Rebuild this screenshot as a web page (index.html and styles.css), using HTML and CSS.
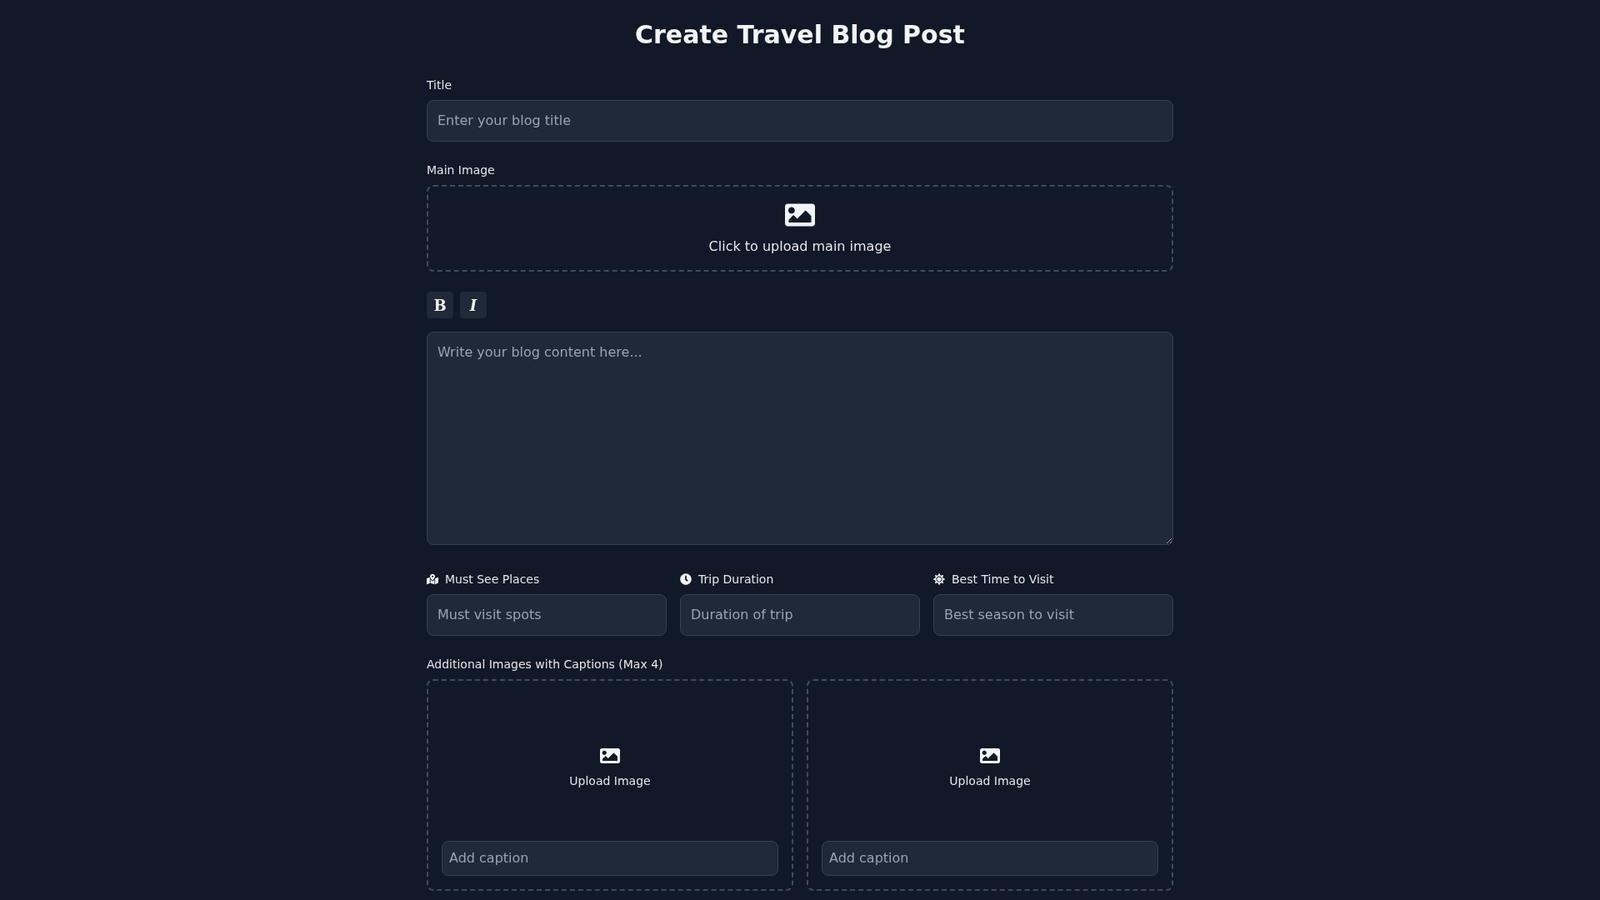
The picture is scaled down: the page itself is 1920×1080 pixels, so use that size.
FILE: index.html
```html
<!DOCTYPE html>
<html lang="en">
<head>
  <meta charset="UTF-8" />
  <title>Create Travel Blog Post</title>
  <link rel="stylesheet" href="styles.css">
</head>
<body>
  <div class="container">
    <h1>Create Travel Blog Post</h1>
    <div class="field">
      <label>Title</label>
      <input type="text" placeholder="Enter your blog title">
    </div>
    <div class="field">
      <label>Main Image</label>
      <div class="upload-main">
        <svg width="36" height="36" viewBox="0 0 512 512"><path fill="#f3f4f6" d="M464 448H48c-26.510 0-48-21.490-48-48V112c0-26.510 21.490-48 48-48h416c26.510 0 48 21.490 48 48v288c0 26.510-21.490 48-48 48zM112 120c-30.928 0-56 25.072-56 56s25.072 56 56 56 56-25.072 56-56-25.072-56-56-56zM64 384h384V272l-87.515-87.515c-4.686-4.686-12.284-4.686-16.971 0L208 320l-55.515-55.515c-4.686-4.686-12.284-4.686-16.971 0L64 336v48z"/></svg>
        <p>Click to upload main image</p>
      </div>
    </div>
    <div class="toolbar">
      <button class="tool-btn bold">B</button>
      <button class="tool-btn italic">I</button>
    </div>
    <textarea placeholder="Write your blog content here..."></textarea>
    <div class="details">
      <div>
        <label class="icon-label"><svg width="14" height="14" viewBox="0 0 576 512"><path fill="#f3f4f6" d="M288 0c-69.590 0-126 56.410-126 126 0 56.260 82.350 158.800 113.900 196.020 6.390 7.540 17.820 7.540 24.200 0C331.650 284.800 414 182.260 414 126 414 56.410 357.590 0 288 0zm0 168c-23.200 0-42-18.800-42-42s18.800-42 42-42 42 18.800 42 42-18.800 42-42 42zM20.120 215.950A32.006 32.006 0 0 0 0 245.660v250.320c0 11.320 11.430 19.060 21.940 14.860L160 448V214.920c-8.840-15.980-16.070-31.540-21.250-46.420L20.120 215.950zM288 359.670c-14.070 0-27.380-6.180-36.510-16.960-19.660-23.200-40.570-49.620-59.490-76.720V448l192 64V266c-18.920 27.090-39.820 53.520-59.490 76.720-9.130 10.770-22.440 16.950-36.510 16.950zm266.060-198.510L416 224v288l139.880-55.950A31.996 31.996 0 0 0 576 426.340V176.020c0-11.320-11.430-19.060-21.940-14.860z"/></svg>Must See Places</label>
        <input type="text" placeholder="Must visit spots">
      </div>
      <div>
        <label class="icon-label"><svg width="14" height="14" viewBox="0 0 512 512"><path fill="#f3f4f6" d="M256,8C119,8,8,119,8,256S119,504,256,504,504,393,504,256,393,8,256,8Zm92.490,313h0l-20,25a16,16,0,0,1-22.490,2.500h0l-67-49.720a40,40,0,0,1-15-31.230V112a16,16,0,0,1,16-16h32a16,16,0,0,1,16,16V256l58,42.500A16,16,0,0,1,348.490,321Z"/></svg>Trip Duration</label>
        <input type="text" placeholder="Duration of trip">
      </div>
      <div>
        <label class="icon-label"><svg width="14" height="14" viewBox="0 0 512 512"><path fill="#f3f4f6" d="M256 160c-52.900 0-96 43.100-96 96s43.100 96 96 96 96-43.100 96-96-43.100-96-96-96zm246.400 80.500l-94.700-47.300 33.500-100.400c4.500-13.600-8.400-26.500-21.900-21.900l-100.400 33.500-47.400-94.800c-6.400-12.800-24.600-12.800-31 0l-47.300 94.700L92.700 70.800c-13.600-4.500-26.500 8.400-21.900 21.900l33.500 100.400-94.700 47.400c-12.800 6.400-12.800 24.600 0 31l94.700 47.300-33.500 100.500c-4.500 13.600 8.400 26.500 21.900 21.900l100.400-33.500 47.300 94.700c6.400 12.800 24.600 12.800 31 0l47.300-94.700 100.400 33.500c13.600 4.500 26.500-8.400 21.900-21.900l-33.500-100.400 94.700-47.300c13-6.500 13-24.700.2-31.100zm-155.900 106c-49.900 49.900-131.100 49.900-181 0-49.900-49.900-49.900-131.100 0-181 49.900-49.900 131.100-49.900 181 0 49.900 49.900 49.900 131.100 0 181z"/></svg>Best Time to Visit</label>
        <input type="text" placeholder="Best season to visit">
      </div>
    </div>
    <div class="field">
      <label>Additional Images with Captions (Max 4)</label>
      <div class="gallery">
        <div class="gallery-item">
          <div class="gallery-drop">
            <svg width="24" height="24" viewBox="0 0 512 512"><path fill="#f3f4f6" d="M464 448H48c-26.510 0-48-21.490-48-48V112c0-26.510 21.490-48 48-48h416c26.510 0 48 21.490 48 48v288c0 26.510-21.490 48-48 48zM112 120c-30.928 0-56 25.072-56 56s25.072 56 56 56 56-25.072 56-56-25.072-56-56-56zM64 384h384V272l-87.515-87.515c-4.686-4.686-12.284-4.686-16.971 0L208 320l-55.515-55.515c-4.686-4.686-12.284-4.686-16.971 0L64 336v48z"/></svg>
            <p>Upload Image</p>
          </div>
          <input type="text" class="caption" placeholder="Add caption">
        </div>
        <div class="gallery-item">
          <div class="gallery-drop">
            <svg width="24" height="24" viewBox="0 0 512 512"><path fill="#f3f4f6" d="M464 448H48c-26.510 0-48-21.490-48-48V112c0-26.510 21.490-48 48-48h416c26.510 0 48 21.490 48 48v288c0 26.510-21.490 48-48 48zM112 120c-30.928 0-56 25.072-56 56s25.072 56 56 56 56-25.072 56-56-25.072-56-56-56zM64 384h384V272l-87.515-87.515c-4.686-4.686-12.284-4.686-16.971 0L208 320l-55.515-55.515c-4.686-4.686-12.284-4.686-16.971 0L64 336v48z"/></svg>
            <p>Upload Image</p>
          </div>
          <input type="text" class="caption" placeholder="Add caption">
        </div>
      </div>
    </div>
  </div>
</body>
</html>
```

FILE: styles.css
```css
* {
  margin: 0;
  padding: 0;
  box-sizing: border-box;
}
html, body {
  height: 100%;
  overflow: hidden;
}
body {
  font-family: 'DejaVu Sans', sans-serif;
  background-color: #111827;
  color: #e5e7eb;
}
.container {
  width: 896px;
  margin: 0 auto;
  padding-top: 24px;
  will-change: transform;
}
h1 {
  font-size: 30px;
  line-height: 36px;
  font-weight: 700;
  text-align: center;
  margin-bottom: 32px;
  color: #f3f4f6;
}
.field {
  margin-bottom: 24px;
}
label {
  display: block;
  font-size: 14px;
  line-height: 20px;
  margin-bottom: 8px;
}
input, textarea {
  display: block;
  width: 100%;
  font-family: inherit;
  font-size: 16px;
  line-height: 24px;
  color: #f3f4f6;
  background: #1f2937;
  border: 1px solid #374151;
  border-radius: 8px;
  padding: 12px;
}
input::placeholder, textarea::placeholder {
  color: #9ca3af;
  opacity: 1;
}
.upload-main {
  height: 104px;
  border: 2px dashed #414b5b;
  border-radius: 8px;
  display: flex;
  flex-direction: column;
  align-items: center;
  justify-content: center;
  gap: 8px;
}
.upload-main p {
  font-size: 16px;
  line-height: 24px;
}
.toolbar {
  display: flex;
  gap: 8px;
  margin-bottom: 16px;
}
.tool-btn {
  width: 32px;
  height: 32px;
  background: #1f2937;
  color: #f3f4f6;
  border: none;
  border-radius: 4px;
  font-size: 18px;
  font-family: 'DejaVu Serif', serif;
  font-weight: 700;
}
.tool-btn.italic {
  font-style: italic;
}
textarea {
  height: 256px;
  margin-bottom: 31px;
}
.details {
  display: grid;
  grid-template-columns: repeat(3, 1fr);
  gap: 16px;
  margin-bottom: 24px;
}
.icon-label {
  display: flex;
  align-items: center;
  gap: 8px;
}
.gallery {
  display: grid;
  grid-template-columns: repeat(2, 1fr);
  gap: 16px;
}
.gallery-item {
  height: 254px;
  border: 2px dashed #414b5b;
  border-radius: 8px;
  padding: 16px;
  display: flex;
  flex-direction: column;
}
.gallery-drop {
  flex: 1;
  display: flex;
  flex-direction: column;
  align-items: center;
  justify-content: center;
  gap: 8px;
}
.gallery-drop p {
  font-size: 14px;
  line-height: 20px;
}
input.caption {
  padding: 8px;
}
```
